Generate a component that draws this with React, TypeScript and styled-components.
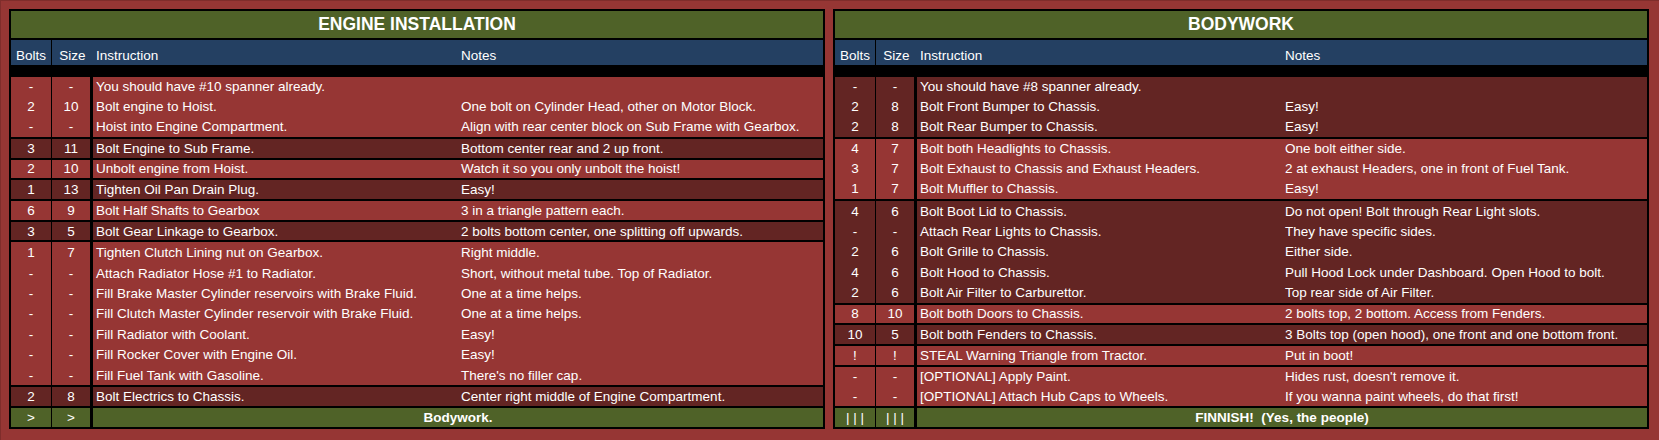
import React from "react";
import styled, { createGlobalStyle } from "styled-components";

const RED = "#963634";
const DARK = "#632523";
const GREEN = "#4F6228";
const BLUE = "#244062";
const PITCH = 20.73;

type Step = [string, string, string, string];
type Group = { tone: "red" | "dark"; steps: Step[] };
type Sheet = { title: string; groups: Group[]; footer: [string, string, string] };

const sheets: Sheet[] = [
  {
    title: "ENGINE INSTALLATION",
    groups: [
      {
        tone: "red",
        steps: [
          ["-", "-", "You should have #10 spanner already.", ""],
          ["2", "10", "Bolt engine to Hoist.", "One bolt on Cylinder Head, other on Motor Block."],
          ["-", "-", "Hoist into Engine Compartment.", "Align with rear center block on Sub Frame with Gearbox."],
        ],
      },
      { tone: "dark", steps: [["3", "11", "Bolt Engine to Sub Frame.", "Bottom center rear and 2 up front."]] },
      { tone: "red", steps: [["2", "10", "Unbolt engine from Hoist.", "Watch it so you only unbolt the hoist!"]] },
      { tone: "dark", steps: [["1", "13", "Tighten Oil Pan Drain Plug.", "Easy!"]] },
      { tone: "red", steps: [["6", "9", "Bolt Half Shafts to Gearbox", "3 in a triangle pattern each."]] },
      { tone: "dark", steps: [["3", "5", "Bolt Gear Linkage to Gearbox.", "2 bolts bottom center, one splitting off upwards."]] },
      {
        tone: "red",
        steps: [
          ["1", "7", "Tighten Clutch Lining nut on Gearbox.", "Right middle."],
          ["-", "-", "Attach Radiator Hose #1 to Radiator.", "Short, without metal tube. Top of Radiator."],
          ["-", "-", "Fill Brake Master Cylinder reservoirs with Brake Fluid.", "One at a time helps."],
          ["-", "-", "Fill Clutch Master Cylinder reservoir with Brake Fluid.", "One at a time helps."],
          ["-", "-", "Fill Radiator with Coolant.", "Easy!"],
          ["-", "-", "Fill Rocker Cover with Engine Oil.", "Easy!"],
          ["-", "-", "Fill Fuel Tank with Gasoline.", "There's no filler cap."],
        ],
      },
      { tone: "dark", steps: [["2", "8", "Bolt Electrics to Chassis.", "Center right middle of Engine Compartment."]] },
    ],
    footer: [">", ">", "Bodywork."],
  },
  {
    title: "BODYWORK",
    groups: [
      {
        tone: "dark",
        steps: [
          ["-", "-", "You should have #8 spanner already.", ""],
          ["2", "8", "Bolt Front Bumper to Chassis.", "Easy!"],
          ["2", "8", "Bolt Rear Bumper to Chassis.", "Easy!"],
        ],
      },
      {
        tone: "red",
        steps: [
          ["4", "7", "Bolt both Headlights to Chassis.", "One bolt either side."],
          ["3", "7", "Bolt Exhaust to Chassis and Exhaust Headers.", "2 at exhaust Headers, one in front of Fuel Tank."],
          ["1", "7", "Bolt Muffler to Chassis.", "Easy!"],
        ],
      },
      {
        tone: "dark",
        steps: [
          ["4", "6", "Bolt Boot Lid to Chassis.", "Do not open! Bolt through Rear Light slots."],
          ["-", "-", "Attach Rear Lights to Chassis.", "They have specific sides."],
          ["2", "6", "Bolt Grille to Chassis.", "Either side."],
          ["4", "6", "Bolt Hood to Chassis.", "Pull Hood Lock under Dashboard. Open Hood to bolt."],
          ["2", "6", "Bolt Air Filter to Carburettor.", "Top rear side of Air Filter."],
        ],
      },
      { tone: "red", steps: [["8", "10", "Bolt both Doors to Chassis.", "2 bolts top, 2 bottom. Access from Fenders."]] },
      { tone: "dark", steps: [["10", "5", "Bolt both Fenders to Chassis.", "3 Bolts top (open hood), one front and one bottom front."]] },
      { tone: "red", steps: [["!", "!", "STEAL Warning Triangle from Tractor.", "Put in boot!"]] },
      {
        tone: "red",
        steps: [
          ["-", "-", "[OPTIONAL] Apply Paint.", "Hides rust, doesn't remove it."],
          ["-", "-", "[OPTIONAL] Attach Hub Caps to Wheels.", "If you wanna paint wheels, do that first!"],
        ],
      },
    ],
    footer: ["| | |", "| | |", "FINNISH!  (Yes, the people)"],
  },
];

const Global = createGlobalStyle`
  html, body { margin: 0; padding: 0; background: ${RED}; }
  body { font-family: "Liberation Sans", Arial, sans-serif; }
`;

const Page = styled.main`
  box-sizing: border-box;
  width: 1659px;
  height: 440px;
  background: ${RED};
  border-top: 1px solid #7f2d2b;
  border-left: 1px solid #7f2d2b;
  padding: 8px 10px 0 8px;
  display: flex;
  align-items: flex-start;
  gap: 8px;
  color: #ffffff;
  font-size: 13.5px;
`;

const Panel = styled.section`
  flex: 1;
  min-width: 0;
  border: 2px solid #000;
  display: flex;
  flex-direction: column;
`;

const Title = styled.h2`
  margin: 0;
  height: 27px;
  background: ${GREEN};
  border-bottom: 2px solid #000;
  display: flex;
  align-items: center;
  justify-content: center;
  font-size: 17.5px;
  font-weight: 700;
  color: #fff;
`;

const columns = `
  display: grid;
  grid-template-columns: 41px 41px 1fr 1fr;
`;

const HeaderRow = styled.div`
  ${columns};
  height: 25px;
  background: ${BLUE};
`;

const HeadCell = styled.div<{ $center?: boolean; $line?: boolean }>`
  box-sizing: border-box;
  display: flex;
  align-items: flex-end;
  justify-content: ${(p) => (p.$center ? "center" : "flex-start")};
  padding: 0 0 1px ${(p) => (p.$center ? "0" : "3px")};
  line-height: 16px;
  border-right: ${(p) => (p.$line ? "1px solid #000" : "none")};
`;

const Band = styled.div`
  height: 11.6px;
  background: #000;
`;

const GroupBox = styled.div<{ $tone: "red" | "dark"; $rows: number }>`
  box-sizing: border-box;
  height: ${(p) => p.$rows * PITCH}px;
  background: ${(p) => (p.$tone === "red" ? RED : DARK)};
  border-bottom: 2px solid #000;
  display: grid;
  grid-template-rows: repeat(${(p) => p.$rows}, 1fr);
`;

const Row = styled.div`
  ${columns};
  min-height: 0;
`;

const NumCell = styled.div<{ $line: number }>`
  box-sizing: border-box;
  display: flex;
  align-items: center;
  justify-content: center;
  border-right: ${(p) => p.$line}px solid #000;
  white-space: pre;
`;

const TextCell = styled.div<{ $bold?: boolean; $span?: boolean }>`
  display: flex;
  align-items: center;
  justify-content: ${(p) => (p.$span ? "center" : "flex-start")};
  padding-left: ${(p) => (p.$span ? "0" : "3px")};
  grid-column: ${(p) => (p.$span ? "span 2" : "auto")};
  font-weight: ${(p) => (p.$bold ? 700 : 400)};
  white-space: pre;
  overflow: visible;
`;

const FooterRow = styled.div`
  ${columns};
  height: 18.7px;
  background: ${GREEN};
`;

function SheetPanel({ sheet }: { sheet: Sheet }) {
  return (
    <Panel>
      <Title>{sheet.title}</Title>
      <HeaderRow>
        <HeadCell $center $line>Bolts</HeadCell>
        <HeadCell $center>Size</HeadCell>
        <HeadCell>Instruction</HeadCell>
        <HeadCell>Notes</HeadCell>
      </HeaderRow>
      <Band />
      {sheet.groups.map((g, gi) => (
        <GroupBox key={gi} $tone={g.tone} $rows={g.steps.length}>
          {g.steps.map((s, si) => (
            <Row key={si}>
              <NumCell $line={1}>{s[0]}</NumCell>
              <NumCell $line={3}>{s[1]}</NumCell>
              <TextCell>{s[2]}</TextCell>
              <TextCell>{s[3]}</TextCell>
            </Row>
          ))}
        </GroupBox>
      ))}
      <FooterRow>
        <NumCell $line={1}>{sheet.footer[0]}</NumCell>
        <NumCell $line={3}>{sheet.footer[1]}</NumCell>
        <TextCell $bold $span>{sheet.footer[2]}</TextCell>
      </FooterRow>
    </Panel>
  );
}

export default function App() {
  return (
    <>
      <Global />
      <Page>
        {sheets.map((s) => (
          <SheetPanel key={s.title} sheet={s} />
        ))}
      </Page>
    </>
  );
}
